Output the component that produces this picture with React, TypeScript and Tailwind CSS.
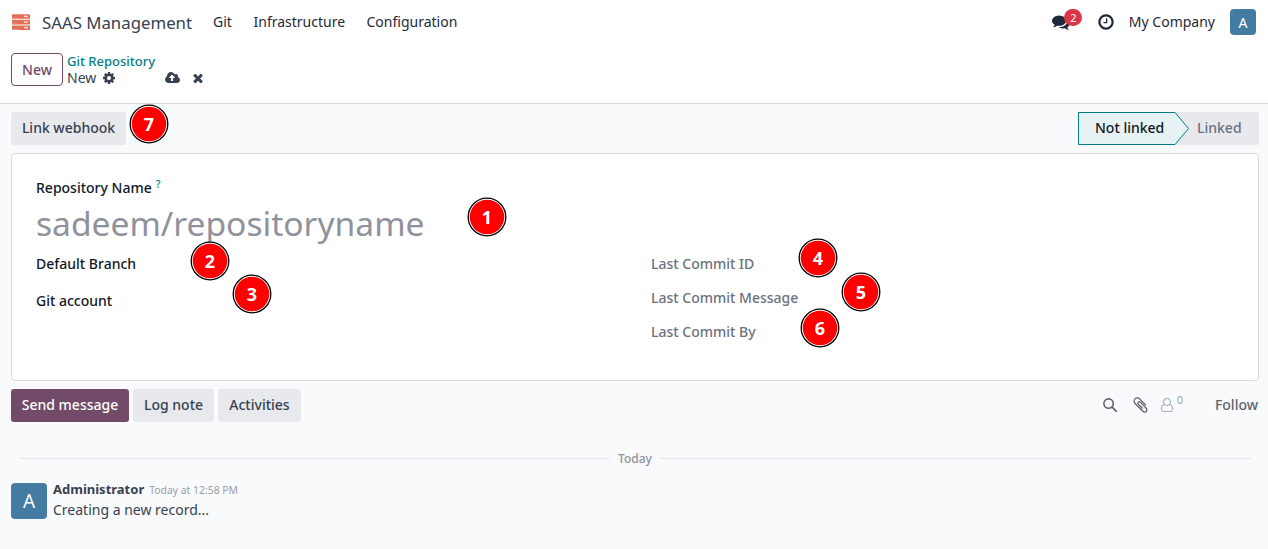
import type { ReactNode } from "react";

function Glyph({ box, d, className }: { box: string; d: string; className: string }) {
  return (
    <svg viewBox={box} className={`shrink-0 ${className}`} fill="currentColor" aria-hidden="true">
      <path d={d} />
    </svg>
  );
}

const COG =
  "M1152 896q0-106-75-181t-181-75-181 75-75 181 75 181 181 75 181-75 75-181zm512-109v222q0 12-8 23t-20 13l-185 28q-19 54-39 91 35 50 107 138 10 12 10 25t-9 23q-27 37-99 108t-94 71q-12 0-26-9l-138-108q-44 23-91 38-16 136-29 186-7 28-36 28h-222q-14 0-24.5-8.5t-11.5-21.5l-28-184q-49-16-90-37l-141 107q-10 9-25 9-14 0-25-11-126-114-165-168-7-10-7-23 0-12 8-23 15-21 51-66.5t54-70.5q-27-50-41-99l-183-27q-13-2-21-12.500t-8-23.500v-222q0-12 8-23t19-13l186-28q14-46 39-92-40-57-107-138-10-12-10-24 0-10 9-23 26-36 98.500-107.500t94.500-71.500q13 0 26 10l138 107q44-23 91-38 16-136 29-186 7-28 36-28h222q14 0 24.500 8.500t11.500 21.500l28 184q49 16 90 37l142-107q9-9 24-9 13 0 25 10 129 119 165 170 7 8 7 22 0 12-8 23-15 21-51 66.500t-54 70.500q26 50 41 98l183 28q13 2 21 12.500t8 23.500z";
const TIMES =
  "M1490 1322q0 40-28 68l-136 136q-28 28-68 28t-68-28l-294-294-294 294q-28 28-68 28t-68-28l-136-136q-28-28-28-68t28-68l294-294-294-294q-28-28-28-68t28-68l136-136q28-28 68-28t68 28l294 294 294-294q28-28 68-28t68 28l136 136q28 28 28 68t-28 68l-294 294 294 294q28 28 28 68z";
const CLOCK =
  "M1024 544v448q0 14-9 23t-23 9h-320q-14 0-23-9t-9-23v-64q0-14 9-23t23-9h224v-352q0-14 9-23t23-9h64q14 0 23 9t9 23zm416 352q0-148-73-273t-198-198-273-73-273 73-198 198-73 273 73 273 198 198 273 73 273-73 198-198 73-273zm224 0q0 209-103 385.500t-279.500 279.500-385.500 103-385.500-103-279.500-279.500-103-385.500 103-385.500 279.500-279.500 385.500-103 385.500 103 279.500 279.500 103 385.500z";
const COMMENTS =
  "M1408 768q0 139-94 257t-256.500 186.500-353.500 68.500q-86 0-176-16-124 88-278 128-36 9-86 16h-3q-11 0-20.500-8t-11.500-21q-1-3-1-6.500t.5-6.500 2-6l2.500-5 3.500-5.500 4-5 4.500-5 4-4.500q5-6 23-25t26-29.500 22.500-29 25-38.500 20.500-44q-124-72-195-177t-71-224q0-139 94-257t256.500-186.500 353.500-68.500 353.500 68.500 256.500 186.500 94 257zm384 256q0 120-71 224.500t-195 176.500q10 24 20.500 44t25 38.500 22.500 29 26 29.500 23 25q1 1 4 4.500t4.500 5 4 5 3.500 5.500l2.500 5 2 6 .5 6.500-1 6.500q-3 14-13 22t-22 7q-50-7-86-16-154-40-278-128-90 16-176 16-271 0-472-132 58 4 88 4 161 0 309-45t264-129q125-92 192-212t67-254q0-77-23-152 129 71 204 178t75 230z";
const CLOUD_UPLOAD =
  "M1216 864q0-14-9-23l-352-352q-9-9-23-9t-23 9l-351 351q-10 12-10 24 0 14 9 23t23 9h224v352q0 13 9.500 22.500t22.500 9.500h192q13 0 22.500-9.500t9.500-22.500v-352h224q13 0 22.500-9.500t9.500-22.500zm640 288q0 159-112.500 271.500t-271.500 112.500h-1088q-185 0-316.500-131.500t-131.500-316.500q0-130 70-240t188-165q-2-30-2-43 0-212 150-362t362-150q156 0 285.500 87t188.500 231q71-62 166-62 106 0 181 75t75 181q0 76-41 138 130 31 213.500 135.500t83.500 238.500z";
const PAPERCLIP =
  "M1596 1385q0 117-79 196t-196 79q-135 0-235-100l-777-776q-113-115-113-271 0-159 110-270t269-111q158 0 273 113l605 606q10 10 10 22 0 16-30.500 46.500t-46.500 30.500q-13 0-23-10l-606-607q-79-77-181-77-106 0-179 75t-73 181q0 105 76 181l776 777q63 63 145 63 64 0 106-42t42-106q0-82-63-145l-581-581q-26-24-60-24-29 0-48 19t-19 48q0 32 25 59l410 410q10 10 10 22 0 16-31 47t-47 31q-12 0-22-10l-410-410q-63-61-63-149 0-82 57-139t139-57q88 0 149 63l581 581q100 98 100 235z";
const USER =
  "M1201 784q47 14 89.500 38t89 73 79.500 115.500 55 172 22 236.500q0 154-100 263.500t-241 109.500h-854q-141 0-241-109.500t-100-263.500q0-131 22-236.500t55-172 79.500-115.500 89-73 89.500-38q-79-125-79-272 0-104 40.500-198.500t109.500-163.500 163.500-109.500 198.500-40.500 198.500 40.500 163.500 109.500 109.500 163.500 40.500 198.500q0 147-79 272zm-433-656q-159 0-271.500 112.500t-112.500 271.500 112.500 271.500 271.500 112.500 271.500-112.500 112.500-271.500-112.500-271.500-271.500-112.500zm427 1536q88 0 150.500-71.500t62.500-173.500q0-239-78.500-377t-225.500-145q-145 127-336 127t-336-127q-147 7-225.500 145t-78.500 377q0 102 62.500 173.500t150.500 71.500h854z";

function Marker({ className, children }: { className: string; children: ReactNode }) {
  return (
    <span className={`absolute flex size-[38px] items-center justify-center ${className}`}>
      <svg viewBox="0 0 40 40" className="absolute -top-px -left-px size-10" aria-hidden="true">
        <circle cx="20" cy="20" r="18.800" fill="#fff" stroke="#000" strokeWidth="1.300" />
        <circle cx="20" cy="20" r="17.300" fill="#f00" />
      </svg>
      <span className="relative font-['Open_Sans',sans-serif] text-[18px] leading-none font-bold text-white">
        {children}
      </span>
    </span>
  );
}

function AppIcon() {
  return (
    <svg viewBox="0 0 18 16" className="h-4 w-[18px] shrink-0" aria-hidden="true">
      {[0.2, 5.8, 11.4].map((y) => (
        <g key={y}>
          <rect x="0" y={y} width="18" height="4.600" rx="0.6" fill="#e46f57" />
          <rect x="0" y={y + 3.600} width="6" height="1" rx="0.4" fill="#ee9a88" />
          <rect x="12" y={y + 1.500} width="3.800" height="1.500" fill="#f8d9d2" />
        </g>
      ))}
    </svg>
  );
}

function TopBar() {
  return (
    <header className="flex h-[45px] items-center bg-white pr-3 pb-px pl-[12px] text-[14px] text-[#1f2937]">
      <AppIcon />
      <span className="mt-[2px] ml-3 w-[171px] text-[16.800px] text-[#374151]">SAAS Management</span>
      <nav className="-mt-px flex">
        <span className="w-[40.500px]">Git</span>
        <span className="w-[113px]">Infrastructure</span>
        <span>Configuration</span>
      </nav>
      <div className="ml-auto flex items-center">
        <span className="relative mr-[27px] flex">
          <Glyph box="0 0 1792 1792" d={COMMENTS} className="size-[18px]" />
          <span className="absolute -top-1 left-[12.500px] flex h-[17px] w-[18px] items-center justify-center rounded-full bg-[#dc3545] text-[11px] leading-none text-white">
            2
          </span>
        </span>
        <Glyph box="0 0 1792 1792" d={CLOCK} className="mr-[14px] size-[18px]" />
        <span className="-mt-px mr-[15px]">My Company</span>
        <span className="flex size-[26px] items-center justify-center rounded bg-[#447ba2] text-[14px] text-white">A</span>
      </div>
    </header>
  );
}

function ControlPanel() {
  return (
    <div className="flex h-[59px] border-b border-[#d8dadd] bg-white pt-2 pl-[11px] text-[14px] text-[#374151]">
      <button className="h-[33px] w-[52px] rounded border border-[#714b67] font-medium text-[#714b67]">New</button>
      <div className="ml-1">
        <div className="h-[17px] text-[13px] leading-[17px] font-medium text-[#017e84]">Git Repository</div>
        <div className="flex h-4 items-center leading-4">
          <span className="w-[35px]">New</span>
          <Glyph box="0 0 1792 1792" d={COG} className="mr-[48.500px] size-[14px]" />
          <Glyph box="-64 0 1920 1792" d={CLOUD_UPLOAD} className="mr-[11.500px] h-[14px] w-[15px]" />
          <Glyph box="0 0 1792 1792" d={TIMES} className="size-[14px]" />
        </div>
      </div>
    </div>
  );
}

function StatusSteps() {
  return (
    <div className="relative flex h-[33px] w-[181px] items-center rounded-r-[2px] bg-[#e7e9ed] pb-[2px] font-medium">
      <svg viewBox="0 0 112 33" className="absolute top-0 left-0 h-[33px] w-[112px]" aria-hidden="true">
        <path d="M.5.5H97L110.500 16.500 97 32.500H.5z" fill="#e6f2f3" stroke="#017e84" />
      </svg>
      <span className="relative w-[119px] pl-[17px] text-[#111827]">Not linked</span>
      <span className="text-[#6b7280]">Linked</span>
    </div>
  );
}

function Sheet() {
  return (
    <section className="mt-2 mr-[9px] ml-[11px] h-[228px] rounded border border-[#d8dadd] bg-white px-6 pt-[23px] text-[14px]">
      <div className="flex h-[21px] items-center font-medium text-[#111827]">
        Repository Name
        <sup className="top-[-4px] ml-1 text-[10.500px] font-medium text-[#0180a5]">?</sup>
      </div>
      <div className="h-[49px] text-[33.600px] leading-[50px] text-[#8f929c]">sadeem/repositoryname</div>
      <div className="grid grid-cols-[615px_1fr]">
        <div className="font-medium text-[#111827]">
          <div className="h-[37px] leading-[34px]">Default Branch</div>
          <div className="h-[37px] leading-[34px]">Git account</div>
        </div>
        <div className="font-medium text-[#6b7280]">
          <div className="h-[34px] leading-[34px]">Last Commit ID</div>
          <div className="h-[34px] leading-[34px]">Last Commit Message</div>
          <div className="h-[34px] leading-[34px]">Last Commit By</div>
        </div>
      </div>
    </section>
  );
}

function Chatter() {
  return (
    <section className="pr-[10px] pl-[11px] text-[14px] text-[#374151]">
      <div className="flex items-center pt-2 font-medium">
        <button className="h-[33px] w-[118px] rounded-[3px] bg-[#714b67] pb-[2px] text-white">Send message</button>
        <button className="ml-1 h-[33px] w-[81px] rounded-[3px] bg-[#e7e9ed] pb-[2px]">Log note</button>
        <button className="ml-1 h-[33px] w-[83px] rounded-[3px] bg-[#e7e9ed] pb-[2px]">Activities</button>
        <div className="-mt-[2px] ml-auto flex items-center text-[#5f636f]">
          <svg viewBox="0 0 14 14" className="mr-[16px] size-[14px]" fill="none" stroke="currentColor" aria-hidden="true">
            <circle cx="5.600" cy="5.600" r="4.700" strokeWidth="1.600" />
            <path d="M9 9l4.300 4.300" strokeWidth="1.700" strokeLinecap="round" />
          </svg>
          <Glyph box="192 0 1408 1792" d={PAPERCLIP} className="mr-[13px] h-[18px] w-[15px]" />
          <Glyph box="0 0 1536 1792" d={USER} className="h-[14px] w-3 text-[#a9acb3]" />
          <span className="mb-[9px] ml-1 w-[38px] text-[10.500px] leading-none font-normal text-[#9a9ca5]">0</span>
          <span>Follow</span>
        </div>
      </div>
      <div className="mt-[26px] flex h-[21px] items-center gap-2 pr-[7px] pl-2">
        <span className="h-px flex-1 bg-[#e5e7eb]" />
        <span className="text-[12px] font-medium text-[#8f929c]">Today</span>
        <span className="h-px flex-1 bg-[#e5e7eb]" />
      </div>
      <div className="mt-[14px] flex">
        <span className="flex size-9 items-center justify-center rounded bg-[#447ba2] text-[19px] text-white">A</span>
        <div className="-mt-[3px] ml-[6px]">
          <div className="flex h-5 items-center">
            <span className="text-[13px] font-bold">Administrator</span>
            <span className="mt-px ml-[5px] text-[10.400px] text-[#9a9ca5]">Today at 12:58 PM</span>
          </div>
          <div className="leading-5">Creating a new record...</div>
        </div>
      </div>
    </section>
  );
}

export default function App() {
  return (
    <div className="relative h-[549px] w-[1268px] overflow-hidden bg-[#f9fafb] font-['Noto_Sans',sans-serif] whitespace-nowrap">
      <TopBar />
      <ControlPanel />
      <main>
        <div className="flex items-center justify-between pt-2 pr-[9px] pl-[11px] text-[14px]">
          <button className="h-[33px] w-[115px] rounded-[3px] bg-[#e7e9ed] pb-[2px] font-medium text-[#374151]">
            Link webhook
          </button>
          <StatusSteps />
        </div>
        <Sheet />
        <Chatter />
      </main>
      <Marker className="top-[198px] left-[468px]">1</Marker>
      <Marker className="top-[242px] left-[191px]">2</Marker>
      <Marker className="top-[275px] left-[233px]">3</Marker>
      <Marker className="top-[239px] left-[799px]">4</Marker>
      <Marker className="top-[273px] left-[842px]">5</Marker>
      <Marker className="top-[309px] left-[801px]">6</Marker>
      <Marker className="top-[105px] left-[130px]">7</Marker>
    </div>
  );
}
